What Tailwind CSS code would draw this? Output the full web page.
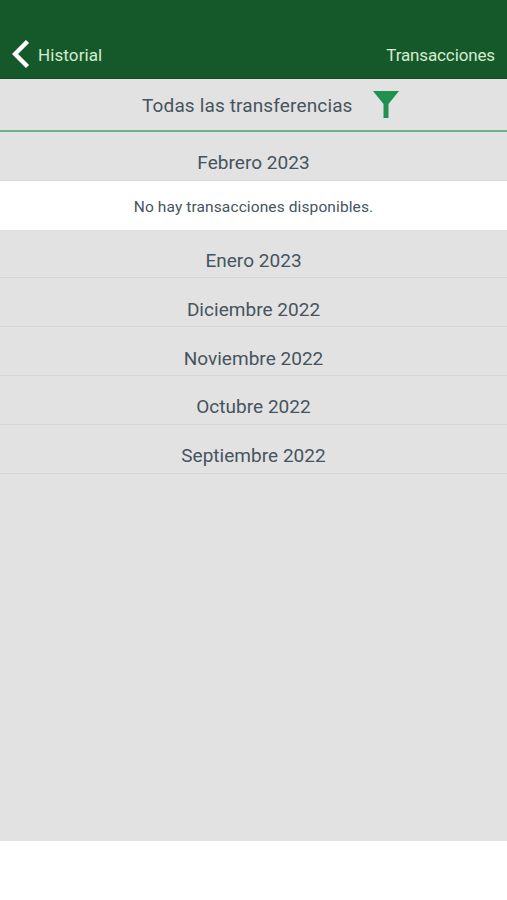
<!DOCTYPE html>
<html lang="es">
<head>
    <meta charset="UTF-8">
    <meta name="viewport" content="width=device-width, initial-scale=1.0">
    <title>Transacciones</title>
    <script src="https://cdn.jsdelivr.net/npm/@tailwindcss/browser@4"></script>
</head>
<body class="bg-white font-[Roboto,sans-serif] text-[#46545e]">
    <div class="flex flex-col h-[841px] bg-[#e2e2e2]">
        <!-- Header -->
        <header class="flex items-end justify-between h-[79px] pl-3 pr-[12px] pb-[10px] bg-[#15592b] border-b border-[#0f4d22] text-[#d5ebcf]">
            <a href="#" class="flex items-center">
                <svg class="w-[18px] h-[28px]" viewBox="0 0 18 28" fill="none" stroke="#fff" stroke-width="4.4">
                    <path d="M15.5 1.5L3 14l12.500 12.500" />
                </svg>
                <span class="ml-2 pt-0.5 -mb-px text-[17px] leading-7 tracking-[0.1px]">Historial</span>
            </a>
            <h1 class="pt-px -mb-px text-[17px] leading-7 tracking-[-0.13px]">Transacciones</h1>
        </header>

        <!-- Filter -->
        <div class="flex h-[53px] pl-[142px] border-b-2 border-[#6fb287]">
            <span class="w-[231px] text-[19px] leading-[54px] tracking-[0.14px] whitespace-nowrap">Todas las transferencias</span>
            <svg class="w-[26px] h-[28px] mt-3" viewBox="0 0 26 28" fill="#219150">
                <path d="M0 0h26L15.500 13v14h-5V13z" />
            </svg>
        </div>

        <!-- Months -->
        <main class="text-center text-[19px] tracking-[0.03px]">
            <h2 class="h-[48.8px] pt-[7.4px] leading-[48px] border-b border-[#d6d6d6]"><span>Febrero 2023</span></h2>
            <p class="h-[48.8px] bg-white text-[15.5px] leading-[53px] tracking-[0.11px]"><span>No hay transacciones disponibles.</span></p>
            <h2 class="h-[48.8px] pt-[7.4px] leading-[48px] border-b border-[#d6d6d6]"><span>Enero 2023</span></h2>
            <h2 class="h-[48.8px] pt-[7.4px] leading-[48px] border-b border-[#d6d6d6]"><span>Diciembre 2022</span></h2>
            <h2 class="h-[48.8px] pt-[7.4px] leading-[48px] border-b border-[#d6d6d6]"><span>Noviembre 2022</span></h2>
            <h2 class="h-[48.8px] pt-[7.4px] leading-[48px] border-b border-[#d6d6d6]"><span>Octubre 2022</span></h2>
            <h2 class="h-[48.8px] pt-[7.4px] leading-[48px] border-b border-[#d6d6d6]"><span>Septiembre 2022</span></h2>
        </main>
    </div>
</body>
</html>
